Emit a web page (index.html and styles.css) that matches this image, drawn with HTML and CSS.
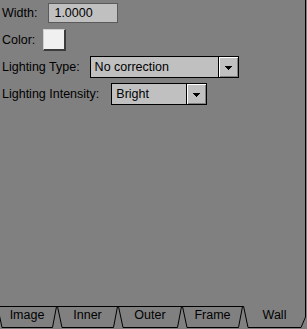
FILE: index.html
```html
<!DOCTYPE html>
<html>
<head>
<meta charset="utf-8">
<link rel="stylesheet" href="styles.css">
</head>
<body>
<div class="app">
  <div class="panel">
    <div class="row row-width">
      <span class="label">Width:</span>
      <div class="entry">1.0000</div>
    </div>
    <div class="row row-color">
      <span class="label">Color:</span>
      <div class="color-btn"></div>
    </div>
    <div class="row row-type">
      <span class="label">Lighting Type:</span>
      <div class="combo combo-type">
        <span class="combo-text">No correction</span>
        <span class="combo-btn"><svg width="7" height="4" shape-rendering="crispEdges"><rect x="0" y="0" width="7" height="1"/><rect x="1" y="1" width="5" height="1"/><rect x="2" y="2" width="3" height="1"/><rect x="3" y="3" width="1" height="1"/></svg></span>
      </div>
    </div>
    <div class="row row-int">
      <span class="label">Lighting Intensity:</span>
      <div class="combo combo-int">
        <span class="combo-text">Bright</span>
        <span class="combo-btn"><svg width="7" height="4" shape-rendering="crispEdges"><rect x="0" y="0" width="7" height="1"/><rect x="1" y="1" width="5" height="1"/><rect x="2" y="2" width="3" height="1"/><rect x="3" y="3" width="1" height="1"/></svg></span>
      </div>
    </div>
  </div>
  <div class="tabs">
    <div class="tab tab-image">
      <svg class="tab-shape" width="60" height="22"><path d="M0 0.5H60M0.5 0.5L5 21.5H55.5L59.5 0.5"/></svg>
      <span class="tab-label">Image</span>
    </div>
    <div class="tab tab-inner">
      <svg class="tab-shape" width="61" height="22"><path d="M0 0.5H61M0.5 0.5L5 21.5H56.5L60.5 0.5"/></svg>
      <span class="tab-label">Inner</span>
    </div>
    <div class="tab tab-outer">
      <svg class="tab-shape" width="64" height="22"><path d="M0 0.5H64M0.5 0.5L5 21.5H59.5L63.5 0.5"/></svg>
      <span class="tab-label">Outer</span>
    </div>
    <div class="tab tab-frame">
      <svg class="tab-shape" width="61" height="22"><path d="M0 0.5H61M0.5 0.5L5 21.5H56.5L60.5 0.5"/></svg>
      <span class="tab-label">Frame</span>
    </div>
    <div class="tab tab-wall">
      <svg class="tab-shape" width="63" height="22"><path d="M0.5 0L5 21.5H58L62.5 11V0"/></svg>
      <span class="tab-label">Wall</span>
    </div>
  </div>
</div>
</body>
</html>
```
FILE: styles.css
```css
html, body {
  margin: 0;
  padding: 0;
  background: #808080;
  overflow: hidden;
}
body {
  width: 307px;
  height: 329px;
  font-family: "Liberation Sans", Arial, sans-serif;
  font-size: 12.5px;
  color: #000;
}
.app {
  display: flex;
  flex-direction: column;
  width: 307px;
  height: 329px;
}
.panel {
  width: 306px;
  height: 306px;
  box-sizing: border-box;
  border-right: 1px solid #000;
  padding: 3px 0 0 2px;
  display: flex;
  flex-direction: column;
}
.row {
  display: flex;
  align-items: center;
}
.row-width { height: 20px; }
.row-color { height: 22px; margin-top: 6px; }
.row-type { height: 22px; margin-top: 5px; }
.row-int { height: 22px; margin-top: 5px; }
.label {
  white-space: nowrap;
}
.entry {
  margin-left: 11px;
  width: 70px;
  height: 20px;
  box-sizing: border-box;
  border: 1px solid #5a5a5a;
  background: #c0c0c0;
  padding-left: 5px;
  line-height: 18px;
}
.color-btn {
  margin-left: 8px;
  width: 23px;
  height: 22px;
  box-sizing: border-box;
  background: #f0f0f0;
  border-top: 1px solid #d0d0d0;
  border-left: 1px solid #d0d0d0;
  border-right: 2px solid #3c3c3c;
  border-bottom: 2px solid #3c3c3c;
}
.combo {
  display: flex;
  height: 22px;
  box-sizing: border-box;
  border: 1px solid #000;
  background: #c0c0c0;
}
.combo-type { margin-left: 10px; width: 149px; }
.combo-int { margin-left: 12px; width: 96px; }
.combo-text {
  flex: 1;
  padding-left: 4px;
  line-height: 20px;
  white-space: nowrap;
}
.combo-btn {
  width: 20px;
  box-sizing: border-box;
  border-left: 1px solid #000;
  background: #c0c0c0;
  box-shadow: inset 1px 1px 0 #fff, inset -1px -1px 0 #808080;
  display: flex;
  align-items: center;
  justify-content: center;
  padding-top: 1px;
}
.combo-btn svg { display: block; fill: #000; }
.tabs {
  display: flex;
  height: 22px;
  margin-left: -3px;
}
.tab {
  position: relative;
  height: 22px;
  display: flex;
  justify-content: center;
  align-items: flex-start;
  flex: none;
}
.tab-image { width: 60px; }
.tab-inner { width: 61px; }
.tab-outer { width: 64px; }
.tab-frame { width: 61px; }
.tab-wall { width: 63px; }
.tab-shape {
  position: absolute;
  left: 0;
  top: 0;
  fill: none;
  stroke: #000;
  stroke-width: 1;
}
.tab-label {
  position: relative;
  padding-top: 2px;
  line-height: 15px;
}
```
